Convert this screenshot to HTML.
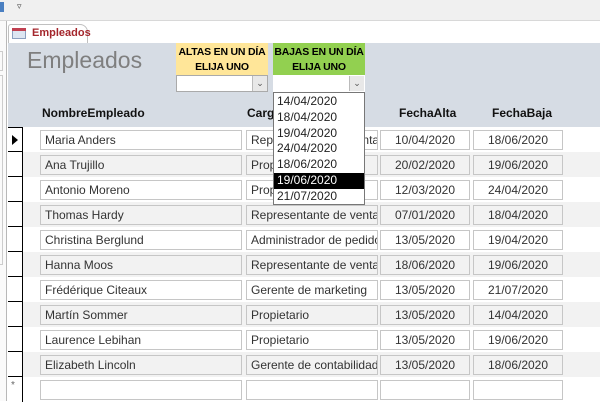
<!DOCTYPE html><html><head><style>
*{margin:0;padding:0;box-sizing:border-box}
body{width:600px;height:401px;overflow:hidden;position:relative;background:#fff;font-family:"Liberation Sans",sans-serif;font-size:12px}
.a{position:absolute}
.f{position:absolute;height:20px;border:1px solid #c6c6c6;background:#fff;font-size:12px;line-height:19px;padding-left:4px;white-space:nowrap;overflow:hidden;color:#333}
.g .f{background:#f2f2f2}
.c{text-align:center;padding:0}
.row{position:absolute;left:23px;width:577px;height:25px}
.g{background:#f2f2f2}
.sel{position:absolute;left:8px;width:15px;height:25px;border-bottom:1px solid #000;border-right:1px solid #000;background:#fff}
.h{position:absolute;top:106px;font-weight:bold;font-size:12px;color:#111}
.hd{position:absolute;top:43px;width:92px;height:32px;text-align:center;font-weight:bold;font-size:10.5px;line-height:15px;padding-top:2px;white-space:nowrap;letter-spacing:-0.2px}
</style></head><body>
<div class="a" style="left:0;top:0;width:600px;height:21px;background:#f0f0f0;border-bottom:1px solid #d8d8d8"></div>
<div class="a" style="left:0;top:2px;width:4px;height:10px;background:#4a7fc1"></div>
<div class="a" style="left:17px;top:1px;font-size:9px;color:#444">&#9663;</div>
<div class="a" style="left:0;top:21px;width:7px;height:380px;background:#fafafa;border-right:1px solid #b8b8b8"></div>
<div class="a" style="left:0;top:51px;width:3px;height:20px;border:1px solid #ccc;border-left:none"></div>
<div class="a" style="left:0;top:75px;width:3px;height:190px;border:1px solid #ccc;border-left:none"></div>
<div class="a" style="left:8px;top:24px;width:80px;height:19px;background:#fff;border:1px solid #c0c0c0;border-bottom:none;border-radius:3px 8px 0 0"></div>
<div class="a" style="left:12px;top:28px;width:14px;height:11px;border:1px solid #8ca0c0;background:#dde6f2"></div>
<div class="a" style="left:12px;top:28px;width:14px;height:3px;background:#c04050"></div>
<div class="a" style="left:32px;top:27px;font-size:11px;font-weight:bold;color:#a4262c">Empleados</div>
<div class="a" style="left:8px;top:43px;width:592px;height:84px;background:#d6dce4"></div>
<div class="a" style="left:27px;top:47px;font-size:23px;color:#7f7f7f">Empleados</div>
<div class="hd" style="left:176px;background:#ffe699">ALTAS EN UN DÍA<br>ELIJA UNO</div>
<div class="hd" style="left:273px;background:#92d050">BAJAS EN UN DÍA<br>ELIJA UNO</div>
<div class="a" style="left:176px;top:75px;width:92px;height:17px;background:#fff;border:1px solid #aaa"></div>
<div class="a" style="left:252px;top:76px;width:15px;height:15px;background:#e8e8e8;border-left:1px solid #bbb;font-size:9px;text-align:center;line-height:14px;color:#555">&#8964;</div>
<div class="a" style="left:273px;top:75px;width:92px;height:17px;background:#fff"></div>
<div class="a" style="left:349px;top:76px;width:15px;height:15px;background:#e8e8e8;border-left:1px solid #bbb;font-size:9px;text-align:center;line-height:14px;color:#555">&#8964;</div>
<div class="h" style="left:42px">NombreEmpleado</div>
<div class="h" style="left:247px">Cargo</div>
<div class="h" style="left:399px">FechaAlta</div>
<div class="h" style="left:492px">FechaBaja</div>

<div class="row" style="top:127px"></div><div class="sel" style="top:127px;border-top:1px solid #000"><span style="position:absolute;left:4px;top:7px;border-left:6px solid #000;border-top:5px solid transparent;border-bottom:5px solid transparent"></span></div>
<div class="f" style="left:40px;top:130px;width:202px">Maria Anders</div><div class="f" style="left:246px;top:130px;width:132px">Representante de ventas</div><div class="f c" style="left:380px;top:130px;width:90px">10/04/2020</div><div class="f c" style="left:473px;top:130px;width:90px">18/06/2020</div>

<div class="row g" style="top:152px"><div class="f" style="left:17px;top:3px;width:202px">Ana Trujillo</div><div class="f" style="left:223px;top:3px;width:132px">Propietario</div><div class="f c" style="left:357px;top:3px;width:90px">20/02/2020</div><div class="f c" style="left:450px;top:3px;width:90px">19/06/2020</div></div><div class="sel" style="top:152px"></div>
<div class="row" style="top:177px"><div class="f" style="left:17px;top:3px;width:202px">Antonio Moreno</div><div class="f" style="left:223px;top:3px;width:132px">Propietario</div><div class="f c" style="left:357px;top:3px;width:90px">12/03/2020</div><div class="f c" style="left:450px;top:3px;width:90px">24/04/2020</div></div><div class="sel" style="top:177px"></div>
<div class="row g" style="top:202px"><div class="f" style="left:17px;top:3px;width:202px">Thomas Hardy</div><div class="f" style="left:223px;top:3px;width:132px">Representante de ventas</div><div class="f c" style="left:357px;top:3px;width:90px">07/01/2020</div><div class="f c" style="left:450px;top:3px;width:90px">18/04/2020</div></div><div class="sel" style="top:202px"></div>
<div class="row" style="top:227px"><div class="f" style="left:17px;top:3px;width:202px">Christina Berglund</div><div class="f" style="left:223px;top:3px;width:132px">Administrador de pedidos</div><div class="f c" style="left:357px;top:3px;width:90px">13/05/2020</div><div class="f c" style="left:450px;top:3px;width:90px">19/04/2020</div></div><div class="sel" style="top:227px"></div>
<div class="row g" style="top:252px"><div class="f" style="left:17px;top:3px;width:202px">Hanna Moos</div><div class="f" style="left:223px;top:3px;width:132px">Representante de ventas</div><div class="f c" style="left:357px;top:3px;width:90px">18/06/2020</div><div class="f c" style="left:450px;top:3px;width:90px">19/06/2020</div></div><div class="sel" style="top:252px"></div>
<div class="row" style="top:277px"><div class="f" style="left:17px;top:3px;width:202px">Frédérique Citeaux</div><div class="f" style="left:223px;top:3px;width:132px">Gerente de marketing</div><div class="f c" style="left:357px;top:3px;width:90px">13/05/2020</div><div class="f c" style="left:450px;top:3px;width:90px">21/07/2020</div></div><div class="sel" style="top:277px"></div>
<div class="row g" style="top:302px"><div class="f" style="left:17px;top:3px;width:202px">Martín Sommer</div><div class="f" style="left:223px;top:3px;width:132px">Propietario</div><div class="f c" style="left:357px;top:3px;width:90px">13/05/2020</div><div class="f c" style="left:450px;top:3px;width:90px">14/04/2020</div></div><div class="sel" style="top:302px"></div>
<div class="row" style="top:327px"><div class="f" style="left:17px;top:3px;width:202px">Laurence Lebihan</div><div class="f" style="left:223px;top:3px;width:132px">Propietario</div><div class="f c" style="left:357px;top:3px;width:90px">13/05/2020</div><div class="f c" style="left:450px;top:3px;width:90px">19/06/2020</div></div><div class="sel" style="top:327px"></div>
<div class="row g" style="top:352px"><div class="f" style="left:17px;top:3px;width:202px">Elizabeth Lincoln</div><div class="f" style="left:223px;top:3px;width:132px">Gerente de contabilidad</div><div class="f c" style="left:357px;top:3px;width:90px">13/05/2020</div><div class="f c" style="left:450px;top:3px;width:90px">18/06/2020</div></div><div class="sel" style="top:352px"></div>
<div class="row" style="top:377px"><div class="f" style="left:17px;top:3px;width:202px"></div><div class="f" style="left:223px;top:3px;width:132px"></div><div class="f c" style="left:357px;top:3px;width:90px"></div><div class="f c" style="left:450px;top:3px;width:90px"></div></div><div class="sel" style="top:377px;border-bottom:none"><span style="position:absolute;left:3px;top:3px;font-size:10px;color:#666">*</span></div>

<div class="a" style="left:273px;top:92px;width:92px;height:113px;background:#fff;border:1px solid #777;font-size:12px;line-height:15.8px;color:#222;padding-top:1px">
<div style="padding-left:3px">14/04/2020</div><div style="padding-left:3px">18/04/2020</div><div style="padding-left:3px">19/04/2020</div><div style="padding-left:3px">24/04/2020</div><div style="padding-left:3px">18/06/2020</div><div style="padding-left:3px;background:#000;color:#fff">19/06/2020</div><div style="padding-left:3px">21/07/2020</div></div>
</body></html>
